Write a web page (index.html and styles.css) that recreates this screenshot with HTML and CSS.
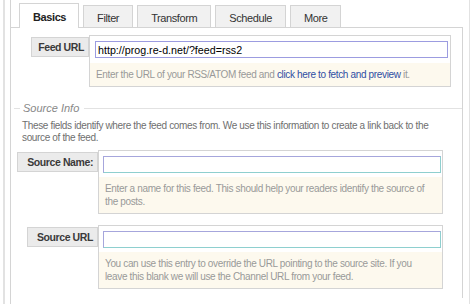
FILE: index.html
```html
<!DOCTYPE html>
<html lang="en">
<head>
    <meta charset="utf-8">
    <title>Feed settings</title>
    <link rel="stylesheet" href="styles.css">
</head>
<body>
    <div class="frame">
        <div class="inner">
            <ul class="tabs">
                <li class="tab active">Basics</li>
                <li class="tab">Filter</li>
                <li class="tab">Transform</li>
                <li class="tab">Schedule</li>
                <li class="tab">More</li>
            </ul>

            <div class="panel">
                <div class="row row-feed">
                    <div class="label-col"><label class="label" for="feed-url">Feed URL</label></div>
                    <div class="field">
                        <div class="field-top">
                            <input id="feed-url" class="input input-focus" type="text" value="http://prog.re-d.net/?feed=rss2">
                        </div>
                        <div class="help">Enter the URL of your RSS/ATOM feed and <a href="#">click here to fetch and preview</a> it.</div>
                    </div>
                </div>

                <fieldset class="group">
                    <legend>Source Info</legend>
                    <p class="intro">These fields identify where the feed comes from. We use this information to create a link back to the source of the feed.</p>

                    <div class="row">
                        <div class="label-col"><label class="label" for="source-name">Source Name:</label></div>
                        <div class="field">
                            <div class="field-top">
                                <input id="source-name" class="input" type="text">
                            </div>
                            <div class="help">Enter a name for this feed. This should help your readers identify the source of the posts.</div>
                        </div>
                    </div>

                    <div class="row row-next">
                        <div class="label-col"><label class="label" for="source-url">Source URL</label></div>
                        <div class="field">
                            <div class="field-top">
                                <input id="source-url" class="input" type="text">
                            </div>
                            <div class="help">You can use this entry to override the URL pointing to the source site. If you leave this blank we will use the Channel URL from your feed.</div>
                        </div>
                    </div>
                </fieldset>
            </div>
        </div>
    </div>
</body>
</html>
```

FILE: styles.css
```css
:root {
    --line: #d4d4d4;
    --line-light: #e2e2e2;
    --tab-bg: #f1f1f1;
    --label-bg: #ebebeb;
    --help-bg: #fdf9ee;
    --text: #333333;
    --text-muted: #6f6f6f;
    --text-help: #999999;
    --link: #2f4ea3;
}

html, body {
    margin: 0;
    padding: 0;
    background: #ffffff;
}

body {
    font-family: "Liberation Sans", Arial, sans-serif;
    font-size: 10px;
    letter-spacing: -0.35px;
    color: var(--text);
}

.frame {
    box-sizing: border-box;
    width: 467px;
    min-height: 304px;
    margin-left: 3px;
    padding: 0 6px 0 5px;
    border-left: 2px solid var(--line-light);
    border-right: 1px solid var(--line-light);
}

.inner {
    min-height: 304px;
    padding-top: 3px;
    border-left: 1px solid var(--line);
}

/* tabs */
.tabs {
    display: flex;
    align-items: flex-end;
    gap: 4px;
    height: 24px;
    margin: 0;
    padding: 0 0 0 8px;
    list-style: none;
}

.tab {
    box-sizing: border-box;
    height: 22px;
    padding: 5px 13px 0;
    border: 1px solid var(--line);
    border-bottom: none;
    background: var(--tab-bg);
    font-size: 11px;
    letter-spacing: -0.4px;
    line-height: 14px;
    white-space: nowrap;
    color: #333;
}

.tab.active {
    position: relative;
    z-index: 1;
    height: 25px;
    margin-bottom: -1px;
    padding: 6px 12px 0 13px;
    background: #ffffff;
    font-weight: bold;
    color: #222;
}

.panel {
    min-height: 270px;
    border-top: 1px solid var(--line);
    border-right: 1px solid var(--line);
}

/* form rows */
.row {
    display: flex;
    align-items: flex-start;
}

.row-feed {
    margin: 7px 11px 0 0;
}

.label-col {
    display: flex;
    justify-content: flex-end;
    flex: 0 0 78px;
    min-width: 0;
    padding-top: 2px;
}

.label {
    box-sizing: border-box;
    flex: none;
    height: 20px;
    padding: 0 4px 0 9px;
    border: 1px solid var(--line);
    background: var(--label-bg);
    font-size: 10.5px;
    font-weight: bold;
    letter-spacing: -0.4px;
    line-height: 18px;
    white-space: nowrap;
    color: #3a3a3a;
}

.row-feed .label {
    padding-left: 6px;
}

.field {
    flex: 1;
    border: 1px solid var(--line);
    background: #ffffff;
}

.field-top {
    padding: 5px 2px 5px 5px;
}

.input {
    display: block;
    box-sizing: border-box;
    width: 100%;
    height: 17px;
    margin: 0;
    padding: 0 2px;
    border: 1px solid;
    border-color: #a6a6dc #8ecfcf #8ecfcf #a6a6dc;
    outline: none;
    font-family: "Liberation Sans", Arial, sans-serif;
    font-size: 10.7px;
    letter-spacing: 0;
    color: #000;
}

.input-focus {
    border-color: #9c9ce0;
}

.help {
    padding: 5px 6px;
    background: var(--help-bg);
    line-height: 13px;
    color: var(--text-help);
}

.help a {
    color: var(--link);
    text-decoration: none;
}

/* source info group */
.group {
    margin: 15px 0 0 3px;
    padding: 0 0 0 8px;
    border: none;
    border-top: 1px solid var(--line-light);
}

.group legend {
    margin-left: -2px;
    padding: 0 5px 0 3px;
    font-style: italic;
    font-size: 11px;
    letter-spacing: 0;
    line-height: 13px;
    color: #888;
}

.intro {
    margin: 5px 12px 6px 0;
    line-height: 12px;
    color: var(--text-muted);
}

.group .row {
    margin-right: 19px;
}

.group .label-col {
    flex-basis: 76px;
}

.group .field-top {
    padding: 5px 1px 4px 4px;
}

.group .help {
    padding: 5px 6px 5px;
}

.row-next {
    margin-top: 11px;
}
```
